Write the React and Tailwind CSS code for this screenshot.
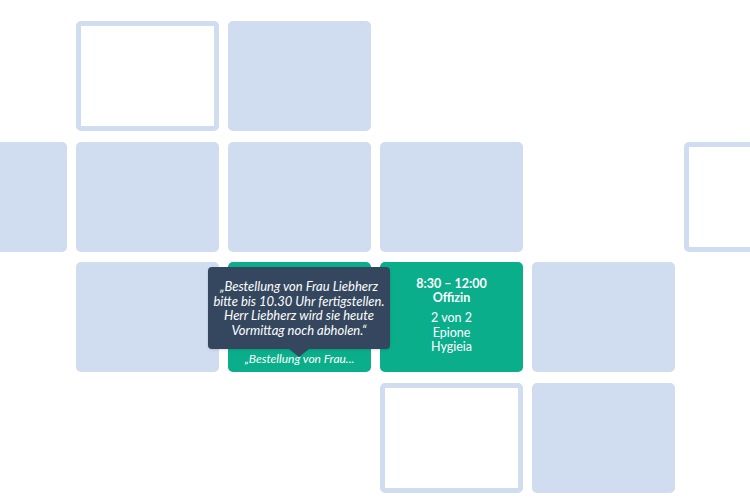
const Filled = ({ className = "" }) => (
    <div className={`rounded-[5px] bg-[#d0dcef] ${className}`} />
);

const Outlined = ({ className = "" }) => (
    <div className={`rounded-[5px] border-[5px] border-[#d0dcef] bg-white ${className}`} />
);

export default function App() {
    return (
        <div className="w-[750px] h-[500px] overflow-hidden bg-white font-['Lato','Liberation_Sans',sans-serif]">
            <div className="ml-[-76px] pt-[21px] grid grid-cols-[repeat(6,143px)] grid-rows-[repeat(4,110px)] gap-x-[9px] gap-y-[10.5px]">
                {/* Row 1 */}
                <Outlined className="col-start-2 row-start-1" />
                <Filled className="col-start-3 row-start-1" />

                {/* Row 2 */}
                <Filled className="col-start-1 row-start-2" />
                <Filled className="col-start-2 row-start-2" />
                <Filled className="col-start-3 row-start-2" />
                <Filled className="col-start-4 row-start-2" />
                <Outlined className="col-start-6 row-start-2" />

                {/* Row 3 */}
                <Filled className="col-start-2 row-start-3" />
                <div className="relative col-start-3 row-start-3 rounded-[5px] bg-[#0aae8b] flex flex-col justify-end items-center pb-[6px] text-white">
                    <p className="text-[12px] italic leading-[15px]">„Bestellung von Frau...</p>

                    {/* Tooltip */}
                    <div className="absolute left-[-20px] top-[5px] w-[182px] h-[82px] rounded-[4px] bg-[#34475e] text-white text-[13px] italic leading-[14.5px] text-center pt-[12px] shadow">
                        <p>„Bestellung von Frau Liebherz</p>
                        <p>bitte bis 10.30 Uhr fertigstellen.</p>
                        <p>Herr Liebherz wird sie heute</p>
                        <p>Vormittag noch abholen.“</p>
                        <div className="absolute left-1/2 -translate-x-1/2 top-full w-0 h-0 border-x-[10px] border-x-transparent border-t-[8px] border-t-[#34475e]" />
                    </div>
                </div>
                <div className="col-start-4 row-start-3 rounded-[5px] bg-[#0aae8b] flex flex-col items-center pt-[15px] text-white">
                    <p className="font-bold text-[12.5px] leading-[14px]">8:30 – 12:00</p>
                    <p className="font-bold text-[12.5px] leading-[14px]">Offizin</p>
                    <div className="mt-[6px] flex flex-col items-center text-[12.5px] leading-[14.5px]">
                        <p>2 von 2</p>
                        <p>Epione</p>
                        <p>Hygieia</p>
                    </div>
                </div>
                <Filled className="col-start-5 row-start-3" />

                {/* Row 4 */}
                <Outlined className="col-start-4 row-start-4" />
                <Filled className="col-start-5 row-start-4" />
            </div>
        </div>
    );
}
